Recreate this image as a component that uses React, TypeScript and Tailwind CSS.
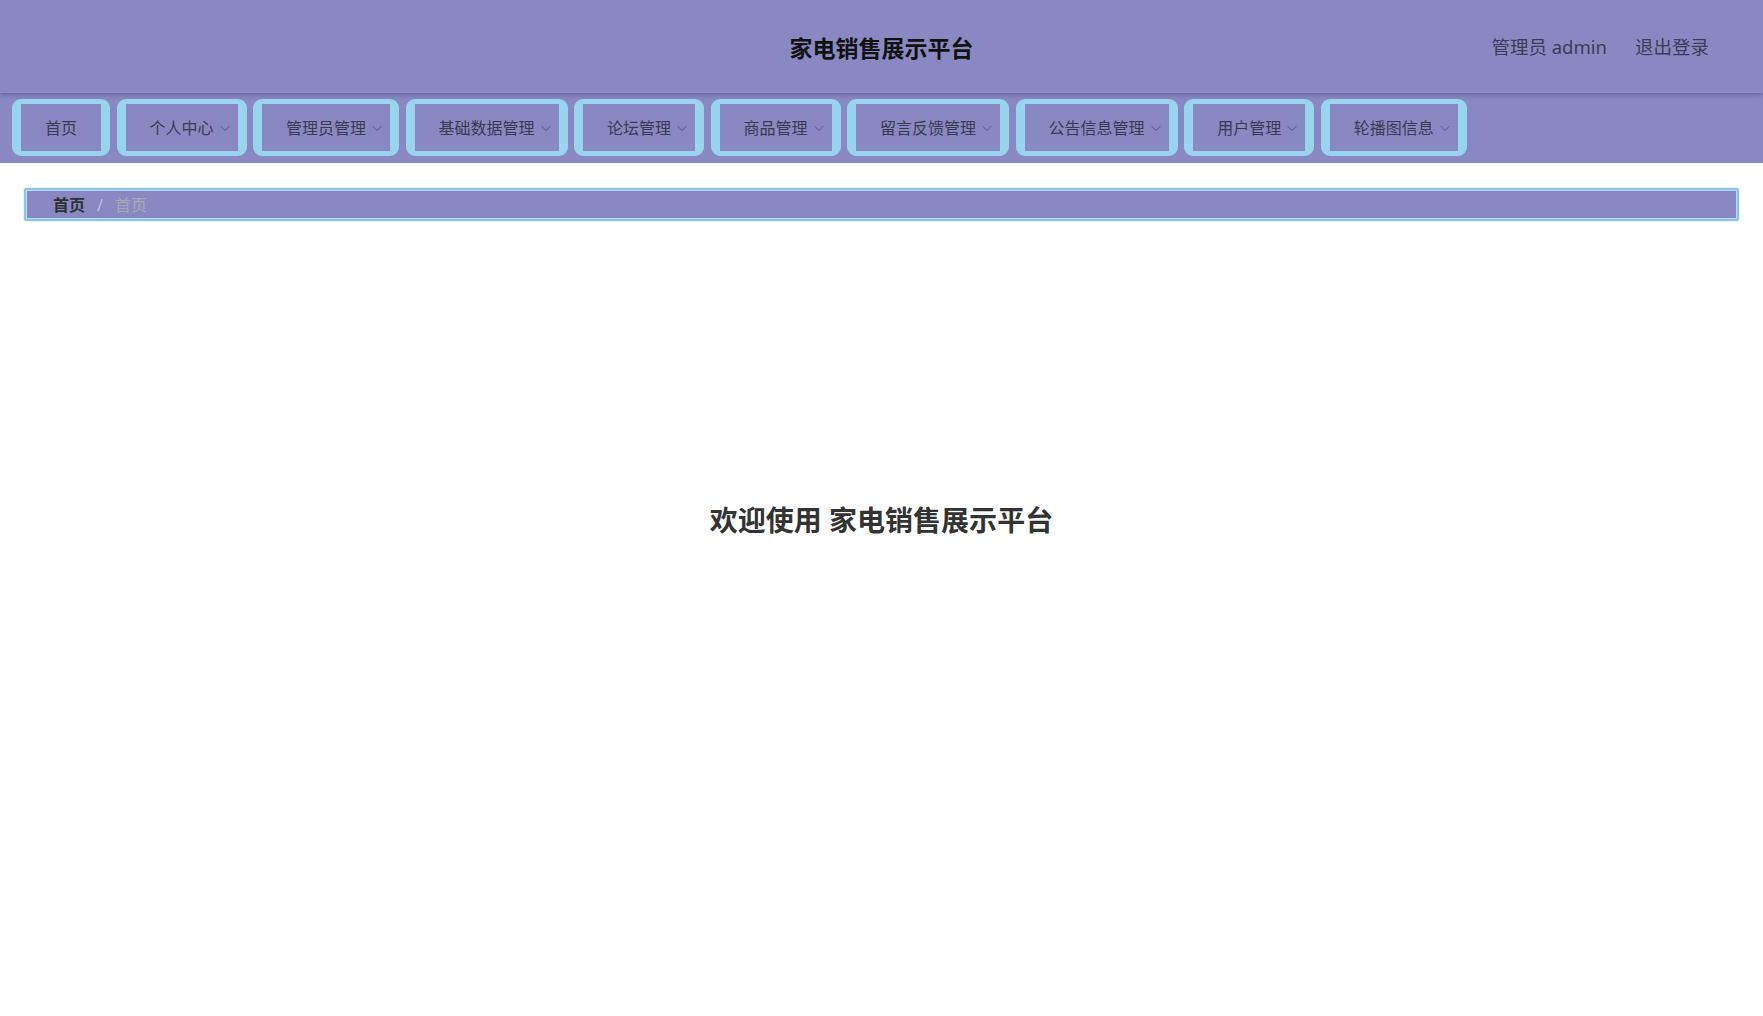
const menus: { label: string; sub: boolean }[] = [
  { label: '首页', sub: false },
  { label: '个人中心', sub: true },
  { label: '管理员管理', sub: true },
  { label: '基础数据管理', sub: true },
  { label: '论坛管理', sub: true },
  { label: '商品管理', sub: true },
  { label: '留言反馈管理', sub: true },
  { label: '公告信息管理', sub: true },
  { label: '用户管理', sub: true },
  { label: '轮播图信息', sub: true },
];

function Chevron() {
  return (
    <svg width="12" height="12" viewBox="0 0 12 12" className="ml-[5px] mt-[1px]">
      <polyline points="1.5,4 6,8.5 10.5,4" fill="none" stroke="#5e5e78" strokeWidth="1" />
    </svg>
  );
}

export default function App() {
  return (
    <div className="min-h-screen bg-white text-[#333]" style={{ fontFamily: '"Noto Sans", "Noto Sans CJK SC", sans-serif' }}>
      <header className="relative z-10 h-[93px] bg-[#8a88c2] shadow-[0_2px_4px_rgba(40,40,80,0.35)] flex items-center justify-center">
        <div className="text-[23px] font-bold text-[#111] mt-[4px]">家电销售展示平台</div>
        <div className="absolute right-[54px] top-0 h-full flex items-center gap-[28px] text-[18.5px] text-[#3c3c58]">
          <span>管理员 admin</span>
          <span>退出登录</span>
        </div>
      </header>

      <nav className="h-[70px] bg-[#8a88c2] flex items-start gap-[6.5px] pl-[12px] pt-[6px]">
        {menus.map((m) => (
          <div
            key={m.label}
            className={`h-[57px] flex items-center border-y-[5px] border-x-[9px] border-[#99d4ee] rounded-[9px] text-[16px] text-[#3a3a52] ${m.sub ? 'pl-[24px] pr-[7px]' : 'px-[24px]'}`}
          >
            <span>{m.label}</span>
            {m.sub && <Chevron />}
          </div>
        ))}
      </nav>

      <div className="px-[24px] pt-[25px]">
        <div className="h-[33px] flex items-center pl-[27px] bg-[#8a88c2] border-2 border-[#8fc4ea] ring-1 ring-inset ring-[#b4dcf4] shadow-[0_0_2px_#a6d4f2] rounded-[2px] text-[16px]">
          <span className="font-bold text-[#303133]">首页</span>
          <span className="mx-[12px] text-[#c0c4cc]">/</span>
          <span className="text-[#a8a8b4]">首页</span>
        </div>
      </div>

      <div className="flex justify-center pt-[278px]">
        <h1 className="text-[28px] font-bold text-[#333]">欢迎使用 家电销售展示平台</h1>
      </div>
    </div>
  );
}
